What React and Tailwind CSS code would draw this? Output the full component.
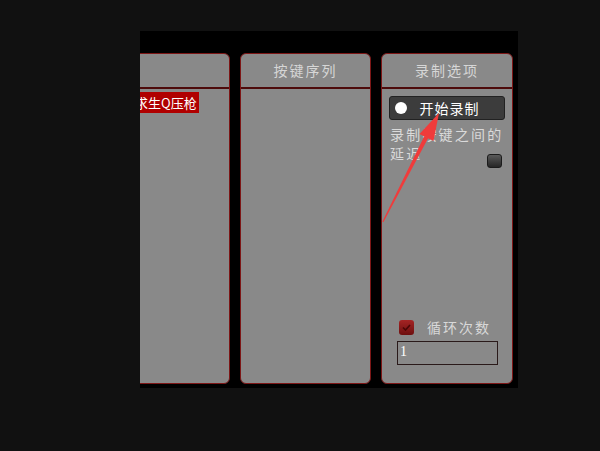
import React from 'react';

const cjk = { fontFamily: '"Noto Sans CJK SC", "Noto Sans", sans-serif' };

function Panel({ title, className = '', children }) {
  return (
    <div className={`flex shrink-0 flex-col overflow-hidden rounded-[6px] border border-[#7d1616] bg-[#898989] ${className}`}>
      <div className="flex h-[35px] shrink-0 items-center justify-center border-b-2 border-[#4d0b0b] text-[14px] tracking-[2px] text-[#d6d6d6]">
        {title}
      </div>
      <div className="flex flex-1 flex-col">{children}</div>
    </div>
  );
}

export default function App() {
  return (
    <div className="relative h-[451px] w-[600px] overflow-hidden bg-[#111111] pl-[140px] pt-[31px]" style={cjk}>
      <div className="flex h-[357px] w-[378px] gap-[10px] overflow-hidden bg-black pb-[4px] pt-[22px]">
        <Panel title="" className="ml-[-40px] w-[130px]">
          <div className="pl-[6px]">
            <span className="inline-block whitespace-nowrap bg-[#b00000] px-[2px] text-[13px] leading-[21px] text-white">绝地求生Q压枪</span>
          </div>
        </Panel>

        <Panel title="按键序列" className="w-[131px]" />

        <Panel title="录制选项" className="w-[132px]">
          <div className="mx-[7px] mt-[7px] flex h-[24px] items-center rounded-[3px] border border-[#222] bg-[#3c3c3c] pl-[5px] pr-[12px]">
            <div className="h-[12px] w-[12px] rounded-full bg-white" />
            <span className="flex-1 text-center text-[14px] tracking-[1px] text-white">开始录制</span>
          </div>
          <div className="ml-[8px] mr-[10px] mt-[5px] text-[14px] leading-[19px] tracking-[2.2px] text-[#dadada]">
            <div className="whitespace-nowrap">录制按键之间的</div>
            <div className="flex items-end justify-between">
              <span>延迟</span>
              <div className="mb-[-5px] h-[14px] w-[15px] rounded-[3px] border border-[#1b1b1b] bg-gradient-to-b from-[#5a5a5a] to-[#262626]" />
            </div>
          </div>
          <div className="flex-1" />
          <div className="ml-[17px] flex items-center gap-[13px]">
            <div className="flex h-[15px] w-[15px] items-center justify-center rounded-[3px] bg-gradient-to-b from-[#a52424] to-[#6e0f0f]">
              <svg width="9" height="7" viewBox="0 0 9 7">
                <path d="M1 3.5 L3.5 6 L8 1" stroke="#4a0606" strokeWidth="1.6" fill="none" />
              </svg>
            </div>
            <span className="text-[14px] tracking-[2px] text-[#d8d8d8]">循环次数</span>
          </div>
          <div className="mb-[18px] ml-[15px] mt-[3px] h-[24px] w-[101px] border border-[#2a1a1a] pl-[2px] text-[14px] leading-[20px] text-white" style={{ fontFamily: '"Liberation Serif", serif' }}>
            1
          </div>
        </Panel>
      </div>

      <svg className="pointer-events-none absolute left-0 top-0" width="600" height="451" viewBox="0 0 600 451">
        <polygon points="428.2,137.9 424.4,136.1 382.4,221.6 383.4,222.2" fill="#f03b3b" />
        <polygon points="439,113 433.5,141 419.5,134" fill="#f03b3b" />
      </svg>
    </div>
  );
}
